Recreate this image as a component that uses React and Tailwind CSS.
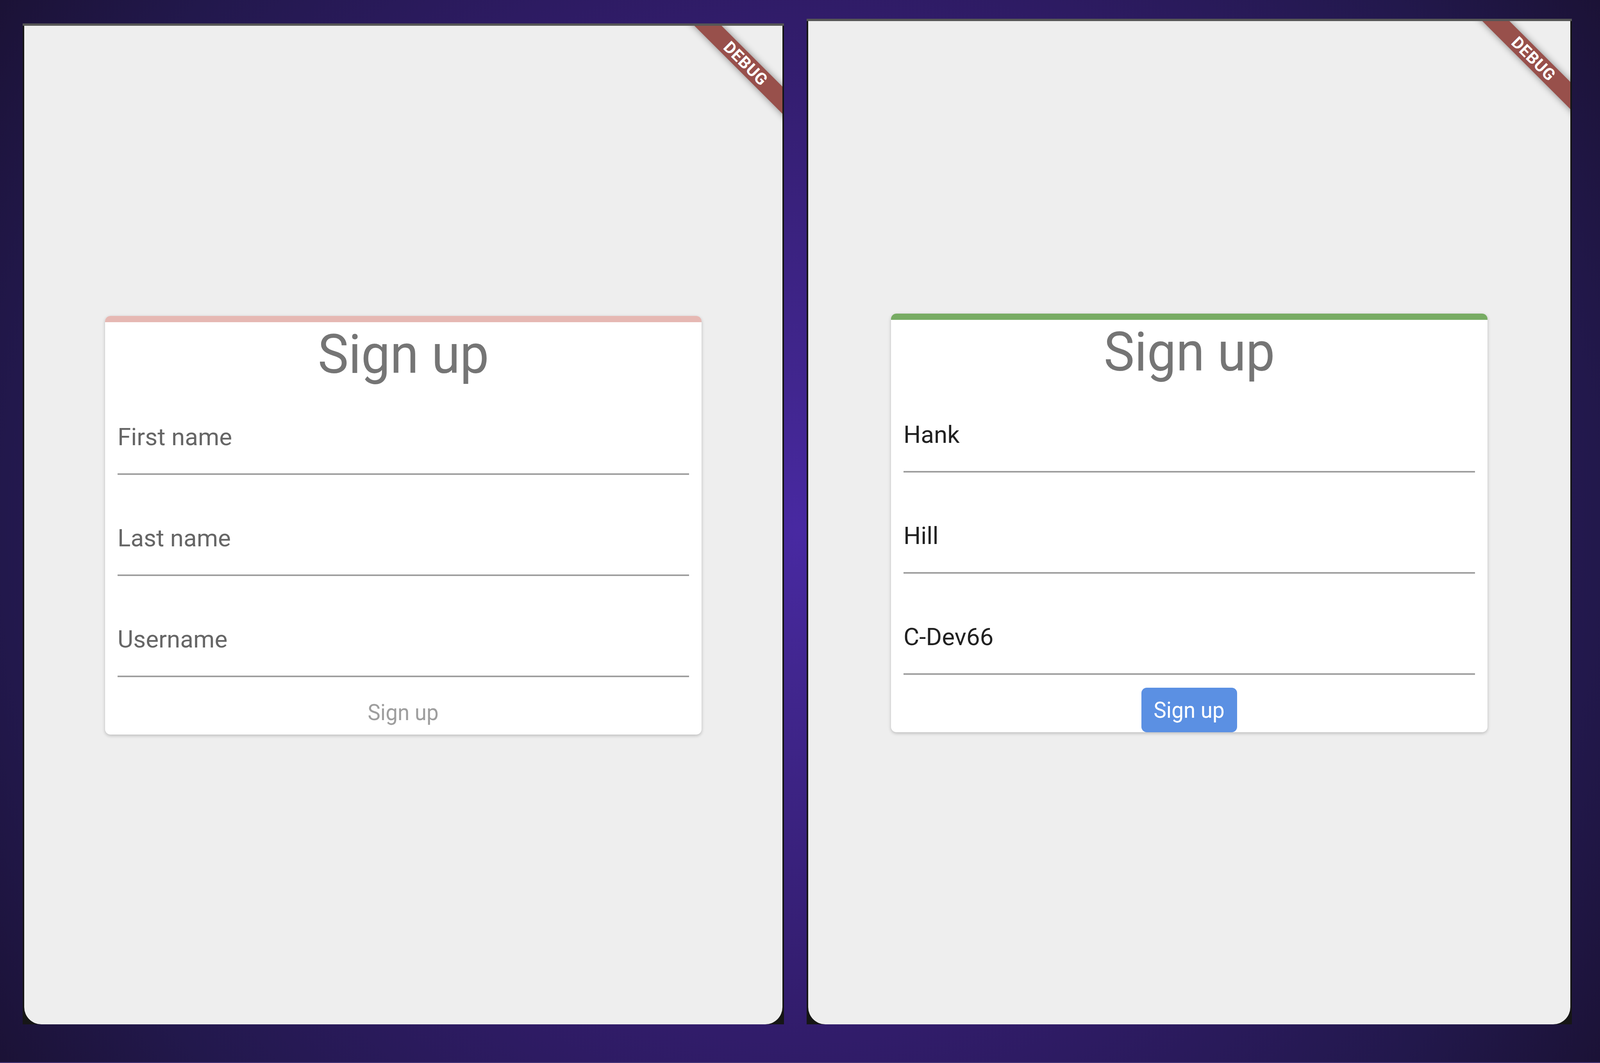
import clsx from "clsx";

const FONT = "font-['Roboto',sans-serif]";

function DebugBanner() {
    return (
        <div className="absolute top-[72px] -right-[106px] w-[400px] h-[49px] rotate-45 bg-[#98504b] shadow-[0_0_18px_rgba(0,0,0,0.45)] flex items-center justify-center">
            <span className={clsx(FONT, "text-white font-bold text-[42px] leading-none tracking-[1px]")}>
                DEBUG
            </span>
        </div>
    );
}

function Field({ value, placeholder, first }) {
    return (
        <div
            className={clsx(
                "pt-[93px] pb-[57px] border-b-4 border-[#9e9e9e]",
                !first && "mt-[32px]"
            )}
        >
            <div
                className={clsx(
                    "text-[62px] leading-[73px]",
                    value ? "text-[#212121]" : "text-[#666666]"
                )}
            >
                {value || placeholder}
            </div>
        </div>
    );
}

function SignUpCard({ values, valid }) {
    const fields = [
        { key: "first", placeholder: "First name" },
        { key: "last", placeholder: "Last name" },
        { key: "user", placeholder: "Username" },
    ];

    return (
        <div
            className={clsx(
                FONT,
                "w-[1527px] bg-white rounded-[14px] overflow-hidden shadow-[0_3px_8px_rgba(0,0,0,0.22)]"
            )}
        >
            <div className={clsx("h-[16px]", valid ? "bg-[#77ab63]" : "bg-[#e6b8b3]")} />
            <div className="text-center text-[140px] leading-[164px] text-[#757575]">
                <span className="inline-block scale-x-[0.945]">Sign up</span>
            </div>
            <div className="px-[32px]">
                {fields.map((f, i) => (
                    <Field
                        key={f.key}
                        first={i === 0}
                        placeholder={f.placeholder}
                        value={values?.[f.key]}
                    />
                ))}
            </div>
            <div className="mt-[33px] flex justify-center">
                <button
                    className={clsx(
                        "h-[114px] w-[245px] rounded-[14px] flex items-center justify-center text-[58px] leading-[68px]",
                        valid ? "bg-[#5b90e3] text-white" : "text-[#9e9e9e]"
                    )}
                >
                    <span className="inline-block scale-x-[0.945]">Sign up</span>
                </button>
            </div>
        </div>
    );
}

function DevicePanel({ className, children }) {
    return (
        <div className={clsx("flex flex-col bg-[#161616]", className)}>
            <div className="h-[6px] bg-[#565656]" />
            <div className="relative flex-1 mx-[4px] bg-[#eeeeee] rounded-b-[44px] overflow-hidden flex items-center justify-center">
                {children}
                <DebugBanner />
            </div>
        </div>
    );
}

export default function App() {
    return (
        <div className="w-full h-[2722px] overflow-hidden flex items-end gap-[58px] pl-[58px] pb-[97px] bg-[radial-gradient(circle_at_50%_50%,#4829a2_0%,#41268f_15%,#311c6a_53%,#22184c_83%,#1b1236_100%)] border-b-2 border-[#4b3c7e]">
            <DevicePanel className="w-[1949px] h-[2563px] shrink-0">
                <SignUpCard valid={false} />
            </DevicePanel>
            <DevicePanel className="w-[1959px] h-[2575px] shrink-0">
                <SignUpCard valid values={{ first: "Hank", last: "Hill", user: "C-Dev66" }} />
            </DevicePanel>
        </div>
    );
}
